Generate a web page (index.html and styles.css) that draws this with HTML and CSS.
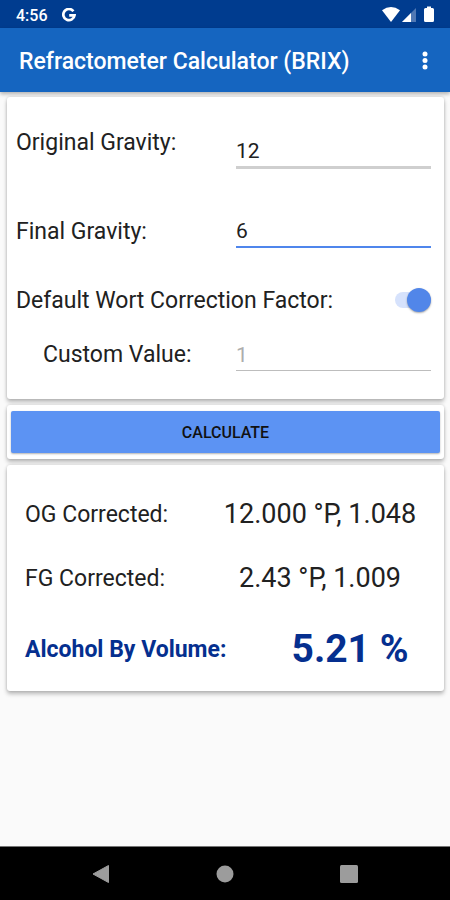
FILE: index.html
```html
<!DOCTYPE html>
<html lang="en">
<head>
<meta charset="utf-8">
<meta name="viewport" content="width=device-width, initial-scale=1">
<title>Refractometer Calculator (BRIX)</title>
<link rel="stylesheet" href="styles.css">
</head>
<body>
<div class="status-bar">
  <span class="clock">4:56</span>
  <svg class="google" width="14" height="14" viewBox="0 0 14 14" aria-hidden="true"><path d="M11.4 3.2A5.600 5.600 0 1 0 12.500 7.300H7.200" fill="none" stroke="#fff" stroke-width="2.700"/></svg>
  <svg class="signals" width="54" height="18" viewBox="0 0 54 18" aria-hidden="true">
    <path d="M0 4.2Q9 -2.2 18 4.2L9 16Z" fill="#fff"/>
    <path d="M34 2V16H20Z" fill="#5078b4"/>
    <path d="M29 7V16H20Z" fill="#fff"/>
    <path d="M45 2V0.500H49V2H50.500Q52 2 52 3.500V14.500Q52 16 50.500 16H43.500Q42 16 42 14.500V3.500Q42 2 43.500 2Z" fill="#fff"/>
  </svg>
</div>
<header class="app-bar">
  <h1>Refractometer Calculator (BRIX)</h1>
  <button class="menu" type="button" aria-label="More options">
    <svg width="6" height="20" viewBox="0 0 6 20" aria-hidden="true"><g fill="#fff"><circle cx="3" cy="3" r="2.500"/><circle cx="3" cy="9.500" r="2.500"/><circle cx="3" cy="16" r="2.500"/></g></svg>
  </button>
</header>
<main>
  <section class="card inputs">
    <div class="row row-original">
      <label for="og">Original Gravity:</label>
      <input class="field field-thick" id="og" type="text" inputmode="decimal" value="12">
    </div>
    <div class="row row-final">
      <label for="fg">Final Gravity:</label>
      <input class="field field-active" id="fg" type="text" inputmode="decimal" value="6">
    </div>
    <div class="row row-switch">
      <label for="default-factor">Default Wort Correction Factor:</label>
      <input class="switch" id="default-factor" type="checkbox" role="switch" checked>
    </div>
    <div class="row row-custom">
      <label for="custom">Custom Value:</label>
      <input class="field" id="custom" type="text" value="1" disabled>
    </div>
  </section>
  <section class="card action">
    <button class="calculate" type="button">CALCULATE</button>
  </section>
  <section class="card results">
    <div class="result"><span>OG Corrected:</span><output>12.000 °P, 1.048</output></div>
    <div class="result"><span>FG Corrected:</span><output>2.43 °P, 1.009</output></div>
    <div class="result total"><span>Alcohol By Volume:</span><output>5.21 %</output></div>
  </section>
</main>
<nav class="nav-bar">
  <button type="button" aria-label="Back"><svg width="20" height="20" viewBox="0 0 20 20"><path d="M17.500 1.500V18.500L2 10Z" fill="#9c9c9c" stroke="#9c9c9c" stroke-linejoin="round"/></svg></button>
  <button type="button" aria-label="Home"><svg width="20" height="20" viewBox="0 0 20 20"><circle cx="10" cy="10" r="8.500" fill="#9c9c9c"/></svg></button>
  <button type="button" aria-label="Recent apps"><svg width="20" height="20" viewBox="0 0 20 20"><rect x="1" y="1" width="18" height="18" rx="1.500" fill="#9c9c9c"/></svg></button>
</nav>
</body>
</html>
```
FILE: styles.css
```css
* { box-sizing: border-box; }
body {
  margin: 0;
  min-height: 100vh;
  display: flex;
  flex-direction: column;
  background: #fafafa;
  color: #212121;
  font-family: Roboto, sans-serif;
  font-size: 23px;
}
button { padding: 0; border: 0; background: none; font-family: inherit; }
svg { display: block; }

.status-bar {
  display: flex;
  align-items: center;
  height: 28px;
  padding: 2px 14px 0 16px;
  background: #003c8f;
  color: #fff;
}
.clock { font-size: 16px; font-weight: 500; }
.google { margin-left: 14px; }
.signals { margin-left: auto; }

.app-bar {
  display: flex;
  align-items: center;
  justify-content: space-between;
  height: 64px;
  padding: 2px 13px 0 19px;
  background: #1565c0;
  box-shadow: 0 2px 4px rgba(0, 0, 0, .3);
  color: #fff;
}
h1 { margin: 0; font-size: 23px; font-weight: 500; white-space: nowrap; }
.menu { display: flex; justify-content: center; width: 24px; }

main { flex: 1; padding: 5px 6px 0 7px; }
.card {
  margin-bottom: 6px;
  border-radius: 3px;
  background: #fff;
  box-shadow: 0 3px 4px rgba(0, 0, 0, .26), 0 0 3px rgba(0, 0, 0, .14);
}

.inputs { padding: 0 13px 16px 9px; }
.row { display: flex; align-items: center; justify-content: space-between; }
.row-original { height: 90px; }
.row-final { height: 88px; }
.row-switch { height: 50px; }
.row-custom { height: 58px; padding-left: 27px; }
.field {
  width: 195px;
  height: 34px;
  padding: 2px 0 0;
  border: 0;
  border-bottom: 1px solid #bdbdbd;
  border-radius: 0;
  outline: 0;
  background: none;
  color: #212121;
  font: 400 21px Roboto, sans-serif;
}
.field-thick { height: 36px; margin-top: 18px; border-bottom: 3px solid #cfcfcf; }
.field-active { border-bottom: 2px solid #4f86ec; }
.field:disabled { color: #adadad; }

.switch {
  appearance: none;
  display: flex;
  align-items: center;
  justify-content: flex-end;
  width: 36px;
  height: 16px;
  margin: 0;
  border-radius: 8px;
  background: #d6e2fc;
}
.switch::before {
  content: "";
  width: 24px;
  height: 24px;
  flex: none;
  border-radius: 50%;
  background: #5186e9;
  box-shadow: 0 1px 2px rgba(0, 0, 0, .35);
}

.action { padding: 6px 4px; }
.calculate {
  display: block;
  width: 100%;
  height: 42px;
  border-radius: 2px;
  background: #5c93f3;
  box-shadow: 0 1px 2px rgba(0, 0, 0, .3);
  color: #111;
  font-size: 16px;
  font-weight: 500;
}

.results { padding: 17px 18px 3px; }
.result {
  display: grid;
  grid-template-columns: auto 212px;
  align-items: center;
  height: 64px;
}
.result output { font-size: 27px; text-align: center; }
.result.total {
  grid-template-columns: auto 152px;
  height: 78px;
  color: #052f8f;
  font-weight: 700;
}
.total output { font-size: 39px; }

.nav-bar {
  display: grid;
  grid-template-columns: repeat(3, 124px);
  justify-content: center;
  height: 54px;
  border-top: 1px solid #757575;
  background: #000;
}
.nav-bar button { display: grid; place-items: center; }
```
